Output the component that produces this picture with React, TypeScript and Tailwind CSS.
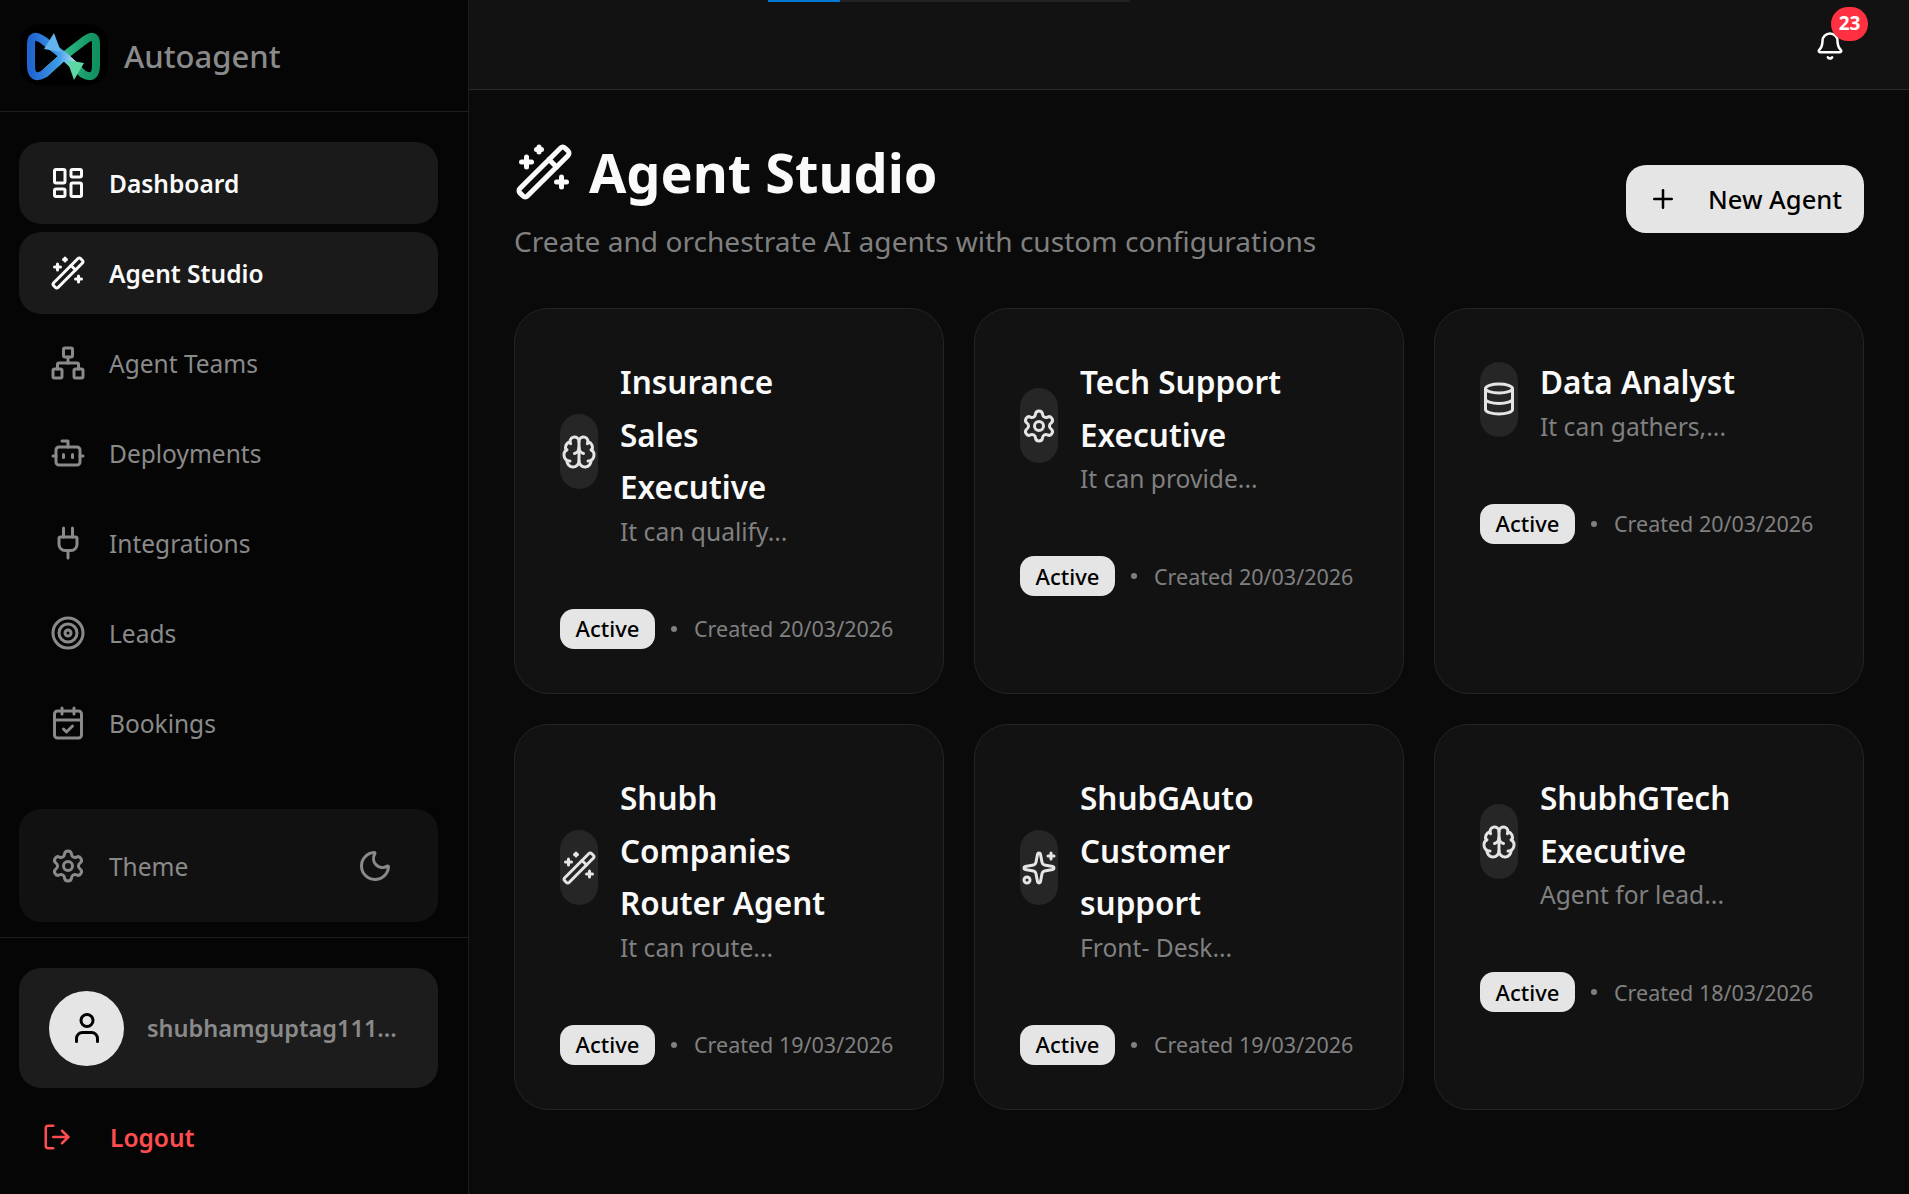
import type { ReactNode } from 'react';
import {
  Bell,
  Bot,
  Brain,
  CalendarCheck,
  Database,
  LayoutDashboard,
  LogOut,
  Moon,
  Network,
  Plug,
  Plus,
  Settings,
  Sparkles,
  Target,
  User,
  WandSparkles,
} from 'lucide-react';

const fontStack = { fontFamily: '"Noto Sans", "Open Sans", sans-serif' };

const navItems = [
  { label: 'Dashboard', icon: LayoutDashboard, active: true },
  { label: 'Agent Studio', icon: WandSparkles, active: true },
  { label: 'Agent Teams', icon: Network },
  { label: 'Deployments', icon: Bot },
  { label: 'Integrations', icon: Plug },
  { label: 'Leads', icon: Target },
  { label: 'Bookings', icon: CalendarCheck },
];

const agents = [
  { title: 'Insurance Sales Executive', desc: 'It can qualify...', date: '20/03/2026', icon: Brain },
  { title: 'Tech Support Executive', desc: 'It can provide...', date: '20/03/2026', icon: Settings },
  { title: 'Data Analyst', desc: 'It can gathers,...', date: '20/03/2026', icon: Database },
  { title: 'Shubh Companies Router Agent', desc: 'It can route...', date: '19/03/2026', icon: WandSparkles },
  { title: 'ShubGAuto Customer support', desc: 'Front- Desk...', date: '19/03/2026', icon: Sparkles },
  { title: 'ShubhGTech Executive', desc: 'Agent for lead...', date: '18/03/2026', icon: Brain },
];

function Logo() {
  return (
    <svg width="88" height="61" viewBox="0 0 88 61" className="shrink-0">
      <defs>
        <linearGradient id="logoBlue" x1="0" y1="0" x2="1" y2="0">
          <stop offset="0" stopColor="#1f66d1" />
          <stop offset="0.6" stopColor="#3f9be8" />
          <stop offset="1" stopColor="#bfe6fa" />
        </linearGradient>
        <linearGradient id="logoGreen" x1="0" y1="0" x2="1" y2="0">
          <stop offset="0" stopColor="#8fe8c4" />
          <stop offset="0.4" stopColor="#2cb583" />
          <stop offset="1" stopColor="#10915f" />
        </linearGradient>
      </defs>
      <rect width="88" height="61" rx="20" fill="#000" />
      <path d="M44 32 L65 16 Q76 8 76 20 V41 Q76 57 63 50 L44 32 L24 50" fill="none" stroke="url(#logoGreen)" strokeWidth="8" strokeLinejoin="round" />
      <path d="M44 32 L23 16 Q11 8 11 20 V41 Q11 57 24 50 L44 32 L57 44" fill="none" stroke="url(#logoBlue)" strokeWidth="8" strokeLinejoin="round" />
      <path d="M34 9 L41 28 L24 25 Z" fill="#62b4ee" />
      <path d="M54 56 L47 36 L64 39 Z" fill="#5cd8a4" />
    </svg>
  );
}

function Panel({ className, children }: { className: string; children: ReactNode }) {
  return <div className={`flex items-center rounded-[22px] ml-[19px] mr-[30px] ${className}`}>{children}</div>;
}

function Sidebar() {
  return (
    <aside className="w-[469px] shrink-0 flex flex-col bg-[#050505] border-r border-[#1c1c1c]">
      <div className="h-[112px] shrink-0 flex items-center gap-[16px] pl-[20px] pb-[3px] border-b border-[#1f1f1f]">
        <Logo />
        <span className="pt-[5px] text-[31px] font-medium text-[#8a8a8a]">Autoagent</span>
      </div>

      <nav className="flex-1 flex flex-col gap-[8px] pt-[30px] pl-[19px] pr-[30px]">
        {navItems.map((item) => (
          <div
            key={item.label}
            className={`h-[82px] flex items-center gap-[23px] pl-[31px] rounded-[22px] text-[24.5px] ${
              item.active ? 'bg-[#1a1a1a] text-[#fafafa] font-semibold' : 'text-[#8a8a8a]'
            }`}
          >
            <item.icon size={36} strokeWidth={2} className="shrink-0" />
            <span className="pt-[2px]">{item.label}</span>
          </div>
        ))}
      </nav>

      <Panel className="h-[113px] bg-[#111111] pl-[31px] pr-[45px] text-[#8a8a8a] text-[24.5px]">
        <Settings size={36} className="shrink-0" />
        <span className="ml-[23px] pt-[4px] flex-1">Theme</span>
        <Moon size={36} />
      </Panel>

      <div className="mt-[15px] border-t border-[#1f1f1f] pt-[30px]">
        <Panel className="h-[120px] bg-[#1c1c1c] pl-[30px]">
          <div className="w-[75px] h-[75px] rounded-full bg-[#e5e5e5] flex items-center justify-center text-black">
            <User size={36} />
          </div>
          <span className="ml-[23px] pt-[2px] text-[23.5px] font-semibold text-[#8a8a8a]">shubhamguptag111...</span>
        </Panel>
        <div className="h-[106px] flex items-center pl-[42px] pb-[8px] text-[#ff4d4f]">
          <LogOut size={30} className="shrink-0" />
          <span className="ml-[38px] pt-[2px] text-[24.5px] font-semibold">Logout</span>
        </div>
      </div>
    </aside>
  );
}

function AgentCard({ agent }: { agent: (typeof agents)[number] }) {
  return (
    <div className="bg-[#121212] border border-[#242424] rounded-[34px] px-[45px] pt-[46px]">
      <div className="flex items-center gap-[22px]">
        <div className="w-[38px] h-[75px] shrink-0 rounded-full bg-[#262626] flex items-center justify-center text-[#e5e5e5]">
          <agent.icon size={36} className="shrink-0" />
        </div>
        <div className="w-[222px] translate-y-[1px]">
          <h3 className="text-[31.5px] leading-[52.6px] font-semibold text-[#fafafa]">{agent.title}</h3>
          <p className="text-[24.6px] leading-[36px] text-[#808080]">{agent.desc}</p>
        </div>
      </div>
      <div className="mt-[60px] flex items-center">
        <span className="w-[95px] h-[40px] shrink-0 flex items-center justify-center rounded-[14px] bg-[#e5e5e5] text-black text-[22px] font-medium">
          Active
        </span>
        <span className="w-[6px] h-[6px] shrink-0 ml-[16px] rounded-full bg-[#808080]" />
        <span className="ml-[17px] pt-[1px] text-[21.5px] text-[#808080] whitespace-nowrap">Created {agent.date}</span>
      </div>
    </div>
  );
}

export default function App() {
  return (
    <div className="flex h-[1194px] bg-[#0a0a0a] overflow-hidden" style={fontStack}>
      <Sidebar />

      <main className="flex-1 min-w-0 flex flex-col">
        <header className="h-[90px] shrink-0 relative bg-[#121212] border-b border-[#2a2a2a] flex items-center justify-end pr-[64px]">
          {/* top progress bar */}
          <div className="absolute top-0 left-[299px] w-[362px] h-[2px] bg-[#222222]">
            <div className="w-[72px] h-full bg-[#0078d4]" />
          </div>
          <div className="relative text-white mt-[2px]">
            <Bell size={30} />
            <span className="absolute -top-[24px] left-[16px] w-[37px] h-[34px] rounded-full bg-[#ff3040] flex items-center justify-center text-[19px] font-bold">
              23
            </span>
          </div>
        </header>

        <div className="px-[45px] pt-[44px]">
          <div className="flex items-center justify-between mb-[44px]">
            <div>
              <h1 className="flex items-center gap-[15px] text-[54px] leading-[76px] font-bold text-[#fafafa]">
                <WandSparkles size={60} />
                Agent Studio
              </h1>
              <p className="mt-[9px] mb-[1px] text-[28.1px] leading-[44px] text-[#808080]">
                Create and orchestrate AI agents with custom configurations
              </p>
            </div>
            <button className="w-[238px] h-[68px] flex items-center pl-[22px] rounded-[20px] bg-[#e5e5e5] text-black text-[25.5px] font-medium">
              <Plus size={30} />
              <span className="ml-[30px]">New Agent</span>
            </button>
          </div>

          <div className="grid grid-cols-3 gap-[30px] auto-rows-[386px]">
            {agents.map((agent) => (
              <AgentCard key={agent.title} agent={agent} />
            ))}
          </div>
        </div>
      </main>
    </div>
  );
}
